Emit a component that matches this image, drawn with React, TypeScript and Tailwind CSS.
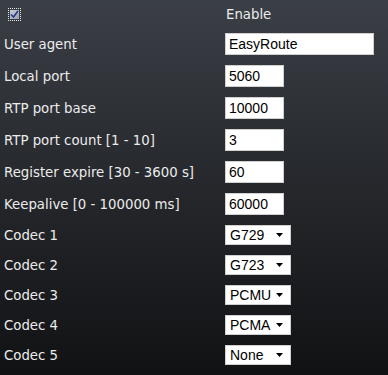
import React from "react";

const labelFont = { fontFamily: '"DejaVu Sans", Verdana, sans-serif' };
const fieldFont = { fontFamily: '"Liberation Sans", Arial, sans-serif', fontSize: "14px" };

const textRows = [
  { label: "Local port", value: "5060" },
  { label: "RTP port base", value: "10000" },
  { label: "RTP port count [1 - 10]", value: "3" },
  { label: "Register expire [30 - 3600 s]", value: "60" },
  { label: "Keepalive [0 - 100000 ms]", value: "60000" },
];

const codecs = ["G729", "G723", "PCMU", "PCMA", "None"];
const codecOptions = ["G729", "G723", "PCMU", "PCMA", "None"];

function Label({ children }: { children: React.ReactNode }) {
  return (
    <span className="pl-[4px] pt-[2px] text-[13.3px] text-[#ececec] whitespace-nowrap" style={labelFont}>
      {children}
    </span>
  );
}

export default function App() {
  return (
    <div className="w-[388px] h-[375px] bg-gradient-to-b from-[#3b3f46] to-[#111214] overflow-hidden">
      <div className="grid grid-cols-[225px_1fr]">
        {/* enable */}
        <div className="h-[28px] flex items-center pl-[8px]">
          <span className="w-[13px] h-[13px] border border-dotted border-[#e8e8e8] p-[1px]">
            <span className="w-full h-full bg-gradient-to-br from-[#c8ccd8] to-[#9aa0b0] flex items-center justify-center">
              <svg width="9" height="9" viewBox="0 0 9 9">
                <path d="M1 4.5 L3.5 7 L8 1" stroke="#2a3a8a" strokeWidth="1.6" fill="none" />
              </svg>
            </span>
          </span>
        </div>
        <div className="h-[28px] flex items-center pl-[1px]">
          <span className="pt-[2px] text-[13.3px] text-[#ececec]" style={labelFont}>Enable</span>
        </div>

        {/* user agent */}
        <div className="h-[32px] flex items-center">
          <Label>User agent</Label>
        </div>
        <div className="h-[32px] flex items-center">
          <input
            defaultValue="EasyRoute"
            className="w-[149px] h-[22px] bg-white border border-[#d0d0d0] px-[3px] text-black outline-none"
            style={fieldFont}
          />
        </div>

        {textRows.map((r) => (
          <React.Fragment key={r.label}>
            <div className="h-[32px] flex items-center">
              <Label>{r.label}</Label>
            </div>
            <div className="h-[32px] flex items-center">
              <input
                defaultValue={r.value}
                className="w-[59px] h-[22px] bg-white border border-[#d0d0d0] px-[3px] text-black outline-none"
                style={fieldFont}
              />
            </div>
          </React.Fragment>
        ))}

        {codecs.map((c, i) => (
          <React.Fragment key={i}>
            <div className="h-[30px] flex items-center">
              <Label>Codec {i + 1}</Label>
            </div>
            <div className="h-[30px] flex items-center">
              <div className="relative w-[66px] h-[20px] bg-white border border-[#d0d0d0] flex items-center pl-[4px]">
                <span className="text-black leading-none" style={fieldFont}>{c}</span>
                <select
                  defaultValue={c}
                  aria-label={`Codec ${i + 1}`}
                  className="absolute inset-0 opacity-0 appearance-none"
                >
                  {codecOptions.map((o) => (
                    <option key={o}>{o}</option>
                  ))}
                </select>
                <svg
                  className="absolute right-[7px] top-[7px] pointer-events-none"
                  width="7"
                  height="4"
                  viewBox="0 0 7 4"
                >
                  <path d="M0 0 H7 L3.5 4 Z" fill="#000" />
                </svg>
              </div>
            </div>
          </React.Fragment>
        ))}
      </div>
    </div>
  );
}
